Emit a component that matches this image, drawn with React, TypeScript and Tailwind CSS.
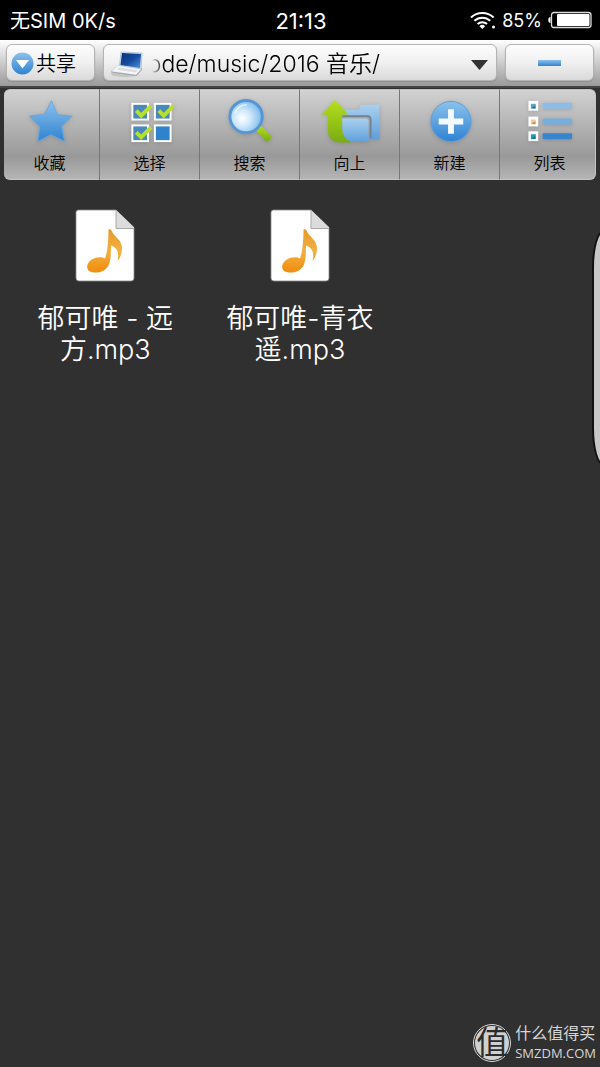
import * as React from "react";

const sans =
  "font-['Inter','Noto_Sans_CJK_SC',sans-serif]";

const keyStyle =
  "flex h-[37px] items-center rounded-md border border-[#b4b4b4] bg-linear-to-b from-[#fdfdfd] via-[#f0f0f0] to-[#dadada] shadow-[0_1px_1px_#8f8f8f]";

function Gradients() {
  return (
    <svg className="absolute h-0 w-0" aria-hidden="true">
      <defs>
        <linearGradient id="blue" x1="0" y1="0" x2="0" y2="1">
          <stop offset="0" stopColor="#8cc2ec" />
          <stop offset="1" stopColor="#2f82d2" />
        </linearGradient>
        <linearGradient id="pale" x1="0" y1="0" x2="0" y2="1">
          <stop offset="0" stopColor="#a9d0ef" />
          <stop offset="1" stopColor="#5f9fdb" />
        </linearGradient>
        <linearGradient id="green" x1="0" y1="0" x2="0" y2="1">
          <stop offset="0" stopColor="#b4e01c" />
          <stop offset="1" stopColor="#79ab14" />
        </linearGradient>
        <linearGradient id="orange" x1="0" y1="0" x2="0" y2="1">
          <stop offset="0" stopColor="#e59a2b" />
          <stop offset="0.5" stopColor="#f3b041" />
          <stop offset="1" stopColor="#f08c0c" />
        </linearGradient>
        <linearGradient id="screen" x1="0" y1="0" x2="1" y2="1">
          <stop offset="0" stopColor="#0d2f78" />
          <stop offset="0.5" stopColor="#164a9e" />
          <stop offset="1" stopColor="#4f93d6" />
        </linearGradient>
        <radialGradient id="lens" cx="0.38" cy="0.55" r="0.6">
          <stop offset="0" stopColor="#ffffff" />
          <stop offset="0.4" stopColor="#d3eafb" />
          <stop offset="1" stopColor="#7fbcec" />
        </radialGradient>
      </defs>
    </svg>
  );
}

function WifiIcon() {
  return (
    <svg width="26" height="19" viewBox="0 0 26 19" fill="none" stroke="#fff" strokeWidth="2">
      <path d="M1 6.400a16.500 16.500 0 0 1 22.600 0" />
      <path d="M4.400 9.800a11.500 11.500 0 0 1 15.800 0" />
      <path d="M7.600 13a7 7 0 0 1 9.400 0" />
      <path d="M9.500 15.200a4 4 0 0 1 5.600 0L12.300 18z" fill="#fff" stroke="none" />
      <circle cx="23.500" cy="16" r="1.500" fill="#fff" stroke="none" />
    </svg>
  );
}

function BatteryIcon() {
  return (
    <svg width="44" height="18" viewBox="0 0 44 18">
      <path d="M2.500 6Q.3 6 .3 9t2.200 3z" fill="#fff" />
      <rect x="3.500" y="1.500" width="39.500" height="15" rx="2.500" fill="none" stroke="#ddd" strokeWidth="1.300" />
      <rect x="9" y="3" width="32.500" height="12" rx="1" fill="#fff" />
    </svg>
  );
}

function LaptopIcon() {
  return (
    <svg className="shrink-0" width="34" height="27" viewBox="0 0 34 27">
      <ellipse cx="15" cy="23" rx="14" ry="3" fill="#aaa" opacity="0.5" />
      <path d="M1 20.500 9 14 32 17.500 26 24z" fill="#f6f7f8" stroke="#c6cacf" strokeWidth=".6" />
      <path d="M11 1 32 2 31 18 9.500 14.500z" fill="#cfe0f2" stroke="#9ab4ce" strokeWidth=".6" />
      <path d="M12 2 31 3 30 17 10.500 14z" fill="url(#screen)" />
      <path d="M9.500 16.500 28 19.300 25.500 21.500 6.500 18.800z" fill="#dcdfe3" />
      <path d="M1 20.500v1L26 25l6-6v-1.500L26 24z" fill="#a3a7ac" />
    </svg>
  );
}

function StarIcon() {
  return (
    <svg width="52" height="52" viewBox="0 0 52 52" className="drop-shadow-sm">
      <path
        d="M27.500 5 33.500 19 48.500 20.500 38 31 41 46.500 27 39.500 13.500 46.500 15.500 31.500 5 20.500 20.500 18.500z"
        fill="url(#blue)"
        stroke="#6aa7dd"
        strokeLinejoin="round"
      />
    </svg>
  );
}

function Tile({ x, y, ticked }: { x: number; y: number; ticked?: boolean }) {
  return (
    <g>
      <rect x={x + 1} y={y + 1} width="16" height="16" fill={ticked ? "#4988bb" : "#2e83cf"} stroke="#fff" strokeWidth="2" />
      {ticked && (
        <path
          d={`M${x + 5} ${y + 8} l5 5 L${x + 20} ${y + 3}`}
          fill="none"
          stroke="#b5e02f"
          strokeWidth="4"
        />
      )}
    </g>
  );
}

function SelectIcon() {
  return (
    <svg width="52" height="52" viewBox="0 0 52 52" className="drop-shadow-sm">
      <Tile x={7} y={7} ticked />
      <Tile x={30} y={7} ticked />
      <Tile x={7} y={29} ticked />
      <Tile x={30} y={29} />
    </svg>
  );
}

function SearchIcon() {
  return (
    <svg width="52" height="52" viewBox="0 0 52 52" className="drop-shadow-sm">
      <path d="M32 35 37 30 47.500 40.500Q48.500 42 47 43.500L44.500 46Q43 47 41.500 45.500z" fill="url(#green)" />
      <circle cx="22" cy="21" r="16.500" fill="url(#lens)" stroke="#5597d6" strokeWidth="3" />
      <path d="M10.500 18a12 12 0 0 1 12-9" fill="none" stroke="#fff" strokeWidth="1.500" opacity=".7" />
    </svg>
  );
}

function UpIcon() {
  return (
    <svg width="64" height="52" viewBox="0 0 64 52" className="drop-shadow-sm">
      <path d="M24 14H41L43 9H62V44H52V20H24z" fill="url(#pale)" />
      <path d="M24 23H48Q51 23 51 26V47H24z" fill="url(#pale)" />
      <path d="M24 20.500H49.500Q53 20.500 53 24V43" fill="none" stroke="#75818c" strokeWidth="1.800" />
      <path d="M16.500 4 30.500 19H24V34Q24 43 34 47.500H22Q9.500 47 9.500 35V19H3z" fill="url(#green)" />
    </svg>
  );
}

function NewIcon() {
  return (
    <svg width="52" height="52" viewBox="0 0 52 52" className="drop-shadow-sm">
      <circle cx="27" cy="26" r="20.500" fill="url(#blue)" stroke="#5d9fdb" />
      <path d="M24 13.500h6v9.500h9.500v6H30v9.500h-6V29h-9.500v-6H24z" fill="#f4f9fd" />
    </svg>
  );
}

function ListIcon() {
  return (
    <svg width="52" height="52" viewBox="0 0 52 52" className="drop-shadow-sm">
      {[5, 21, 36].map((y, i) => (
        <g key={y}>
          <rect x="4" y={y} width="10" height="10" fill="#fff" />
          <rect x="6.500" y={y + 3} width="5" height="5" fill={["#5fa7c4", "#e8cf9a", "#229bab"][i]} />
          <path d={`M7 ${y + 7}l4-2v2.500z`} fill={["#276d91", "#c97a54", "#126b84"][i]} />
          <rect x="18.500" y={y + 2} width="30" height="6" rx="1" fill={["#8dbde7", "#77aee0", "#3785d0"][i]} />
        </g>
      ))}
    </svg>
  );
}

function MusicFileIcon() {
  return (
    <svg width="60" height="73" viewBox="0 0 60 73">
      <path d="M3.500 1H41L59 18.500V69Q59 72 56 72H4Q1 72 1 69V3.500Q1 1 3.500 1z" fill="#fff" stroke="#8c8c8c" strokeWidth=".8" />
      <path d="M41 1 59 18.500V20H41z" fill="#dcdcdc" />
      <path d="M41 1V19.500H59" fill="none" stroke="#a9a9a9" />
      <path
        d="M33.500 20.500Q35.500 19.500 36.500 21.500C38.500 27.500 46.500 30 47 39Q47 47 42.500 52Q45.500 39.500 36 36.500C36 43 36 50 34 55.500C30.500 64 18.500 65.500 13.500 61.500C9.500 56.500 15 49.500 22 48.500Q27 47.500 30 49.500C32.500 43 33.500 31 33.500 20.500z"
        fill="url(#orange)"
      />
    </svg>
  );
}

const tools = [
  { label: "收藏", icon: <StarIcon /> },
  { label: "选择", icon: <SelectIcon /> },
  { label: "搜索", icon: <SearchIcon /> },
  { label: "向上", icon: <UpIcon /> },
  { label: "新建", icon: <NewIcon /> },
  { label: "列表", icon: <ListIcon /> },
];

const files = [
  ["郁可唯 - 远", "方.mp3"],
  ["郁可唯-青衣", "遥.mp3"],
];

function StatusBar() {
  return (
    <header className="grid h-10 grid-cols-3 items-center bg-black pr-2 pl-2.5 text-lg text-white">
      <span className="pt-0.5 text-xl whitespace-nowrap">无SIM 0K/s</span>
      <span className="pt-0.5 text-center text-[22px]">21:13</span>
      <div className="flex items-center justify-end gap-1.5">
        <WifiIcon />
        <span className="pt-0.5">85%</span>
        <BatteryIcon />
      </div>
    </header>
  );
}

function AddressBar() {
  return (
    <div className="flex items-start gap-2 border-b-2 border-[#444] bg-linear-to-b from-white to-[#9a9a9a] px-1.5 pt-1 pb-[5px]">
      <button className={`${keyStyle} w-[89px] gap-0.5 pt-0.5 pl-1 text-xl font-[350] text-black`}>
        <svg width="23" height="23" viewBox="0 0 23 23">
          <circle cx="11.500" cy="11.500" r="11" fill="url(#blue)" />
          <path d="M5 8h13l-6.500 8.500z" fill="#fff" />
        </svg>
        共享
      </button>
      <button className={`${keyStyle} min-w-0 flex-1 pt-1 pr-2 pl-1.5 text-[23px] font-[350] text-black`}>
        <LaptopIcon />
        <span className="ml-2 flex w-[228px] justify-end overflow-hidden whitespace-nowrap mask-l-from-95%">
          ode/music/2016 音乐/
        </span>
        <svg className="ml-auto" width="17" height="10" viewBox="0 0 17 10">
          <path d="M0 0h17L8.500 10z" fill="#333" />
        </svg>
      </button>
      <button aria-label="收起" className={`${keyStyle} w-[89px] justify-center`}>
        <svg width="23" height="6" viewBox="0 0 23 6">
          <rect width="23" height="6" fill="url(#blue)" />
        </svg>
      </button>
    </div>
  );
}

function Toolbar() {
  return (
    <nav className="mt-px grid grid-cols-6">
      {tools.map((tool) => (
        <button
          key={tool.label}
          className="flex h-[91px] flex-col items-center border-y border-r border-y-[#c4c4c4] border-r-[#777] bg-linear-to-b from-[#d2d2d2] via-[#999] via-75% to-[#b5b5b5] pt-1.5 text-base font-[350] text-black first:ml-1 first:rounded-l-md first:pr-1 last:mr-1 last:rounded-r-md last:border-r-[#c4c4c4] last:pl-1"
        >
          {tool.icon}
          <span className="leading-8">{tool.label}</span>
        </button>
      ))}
    </nav>
  );
}

function Watermark() {
  return (
    <footer className="flex items-center justify-end gap-1 pr-1 pb-1 text-[#d6d6d6]">
      <span className="flex size-[38px] items-center justify-center rounded-full border border-[#d6d6d6] p-px">
        <span className="flex size-full items-center justify-center rounded-full bg-[#d0d0d0] text-[32px] text-[#2b2b2b]">
          值
        </span>
      </span>
      <div>
        <p className="text-base leading-5">什么值得买</p>
        <p className="font-['Open_Sans',sans-serif] text-[13px] leading-5 font-medium">SMZDM.COM</p>
      </div>
    </footer>
  );
}

export default function App() {
  return (
    <div className={`relative flex min-h-screen flex-col overflow-hidden bg-[#303030] ${sans}`}>
      <Gradients />
      <StatusBar />
      <AddressBar />
      <Toolbar />
      <main className="grid flex-1 grid-cols-3 items-start px-2 pt-[29px]">
        {files.map(([first, second]) => (
          <button key={first} className="flex flex-col items-center gap-[21px] text-[27px] leading-[31px] font-[350] text-white">
            <MusicFileIcon />
            <span>
              {first}
              <br />
              {second}
            </span>
          </button>
        ))}
      </main>
      <Watermark />
      {/* edge panel handle */}
      <div className="absolute top-[230px] -right-4 h-[236px] w-6 rounded-[50%/16%] border-2 border-[#111] bg-[#c8c8c8]" />
    </div>
  );
}
